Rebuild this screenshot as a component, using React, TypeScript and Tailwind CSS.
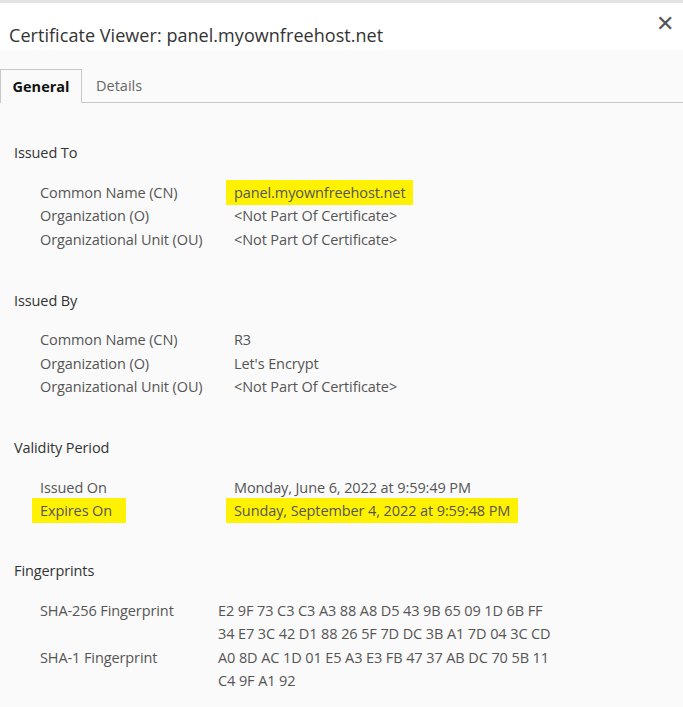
import React from "react";

const F = { fontFamily: '"Open Sans", "Noto Sans", sans-serif' };

function Row({ l, v, hl, hv, w = "w-[194px]" }: { l: string; v: React.ReactNode; hl?: boolean; hv?: boolean; w?: string }) {
  return (
    <div className="flex h-[23.5px] items-center pl-[40px] text-[14.5px] text-[#555] tracking-[-0.1px]">
      <div className={`${w} shrink-0`}>
        <span className={hl ? "bg-[#fff200] -ml-[8px] pl-[8px] pr-[14px] py-[3px]" : ""}>{l}</span>
      </div>
      <div>
        <span className={hv ? "bg-[#fff200] -ml-[8px] px-[8px] py-[3px]" : ""}>{v}</span>
      </div>
    </div>
  );
}

function Head({ t }: { t: string }) {
  return <div className="pl-[14px] text-[14.5px] text-[#333] h-[24px] flex items-center tracking-[-0.1px]">{t}</div>;
}

export default function App() {
  return (
    <div style={F} className="w-[683px] h-[707px] bg-[#fafafa] overflow-hidden">
      <div className="h-[3px] bg-[#e3e3e3]" />
      <div className="bg-white h-[47px] relative flex items-end pl-[9px] pb-[1px]">
        <span className="text-[18px] text-[#333] tracking-[0.05px]">Certificate Viewer: panel.myownfreehost.net</span>
        <span className="absolute right-[9px] top-[8px] text-[22px] text-[#555] leading-none">✕</span>
      </div>
      <div className="mt-[19px] flex border-b border-[#c8c8c8] h-[34px]">
        <div className="w-[82px] border border-b-0 border-[#c8c8c8] bg-[#fafafa] -mb-px flex items-center justify-center text-[14.5px] font-bold text-[#111]">General</div>
        <div className="px-[14px] flex items-center text-[14.5px] text-[#666]">Details</div>
      </div>
      <div className="pt-[38px]">
        <Head t="Issued To" />
        <div className="h-[16px]" />
        <Row l="Common Name (CN)" v="panel.myownfreehost.net" hv />
        <Row l="Organization (O)" v="<Not Part Of Certificate>" />
        <Row l="Organizational Unit (OU)" v="<Not Part Of Certificate>" />
        <div className="h-[37px]" />
        <Head t="Issued By" />
        <div className="h-[16px]" />
        <Row l="Common Name (CN)" v="R3" />
        <Row l="Organization (O)" v="Let's Encrypt" />
        <Row l="Organizational Unit (OU)" v="<Not Part Of Certificate>" />
        <div className="h-[37px]" />
        <Head t="Validity Period" />
        <div className="h-[16px]" />
        <Row l="Issued On" v="Monday, June 6, 2022 at 9:59:49 PM" />
        <Row l="Expires On" v="Sunday, September 4, 2022 at 9:59:48 PM" hl hv />
        <div className="h-[36px]" />
        <Head t="Fingerprints" />
        <div className="h-[16px]" />
        <Row w="w-[178px]" l="SHA-256 Fingerprint" v="E2 9F 73 C3 C3 A3 88 A8 D5 43 9B 65 09 1D 6B FF" />
        <Row w="w-[178px]" l="" v="34 E7 3C 42 D1 88 26 5F 7D DC 3B A1 7D 04 3C CD" />
        <Row w="w-[178px]" l="SHA-1 Fingerprint" v="A0 8D AC 1D 01 E5 A3 E3 FB 47 37 AB DC 70 5B 11" />
        <Row w="w-[178px]" l="" v="C4 9F A1 92" />
      </div>
    </div>
  );
}
